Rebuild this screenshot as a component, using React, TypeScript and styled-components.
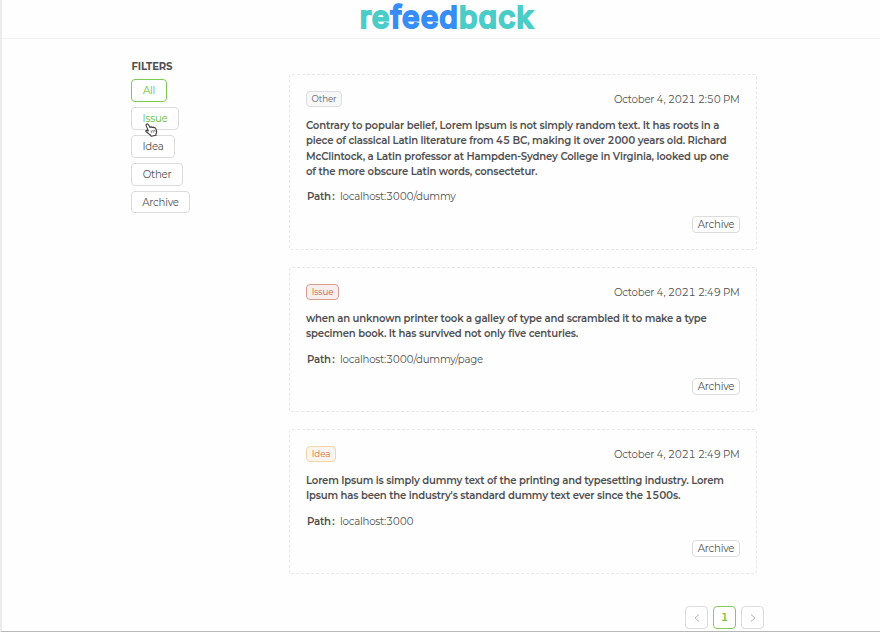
import React from "react";
import styled, { createGlobalStyle } from "styled-components";

const Global = createGlobalStyle`
  * { box-sizing: border-box; }
  body {
    margin: 0;
    background: #fefefe;
    color: #505052;
    font-family: Montserrat, Inter, sans-serif;
    font-size: 10.2px;
    letter-spacing: -0.23px;
    font-feature-settings: "tnum";
  }
  button { font: inherit; letter-spacing: inherit; font-feature-settings: inherit; color: inherit; padding: 0; }
`;

const Page = styled.div`
  height: 632px;
  overflow: hidden;
  display: flex;
  flex-direction: column;
  border-left: 2px solid #ececee;
  border-bottom: 1px solid #b8b8b8;
`;

const Header = styled.header`
  flex: none;
  height: 39px;
  display: flex;
  justify-content: center;
  border-bottom: 1px solid #f2f2f2;
`;

const Logo = styled.h1`
  margin: 0 0 0 12px;
  font-family: Inter, sans-serif;
  font-size: 30px;
  line-height: 34px;
  font-weight: 500;
  letter-spacing: 1.05px;
  font-feature-settings: "cv11";
  color: #4accc8;
  -webkit-text-stroke: 2px currentColor;
  paint-order: stroke fill;
  stroke-linejoin: round;
`;

const LogoAccent = styled.span`
  color: #378df8;
`;

const Body = styled.div`
  flex: 1;
  min-height: 0;
  display: flex;
  padding-left: 129px;
`;

const Sidebar = styled.aside`
  width: 158px;
  padding-top: 20px;
  display: flex;
  flex-direction: column;
  align-items: flex-start;
  gap: 5px;
`;

const SidebarTitle = styled.h2`
  margin: 0 0 1px 0.5px;
  height: 14px;
  line-height: 15px;
  font-size: 10.1px;
  letter-spacing: -0.16px;
  font-weight: 700;
`;

const FilterButton = styled.button<{ $width: number; $state?: "active" | "hover" }>`
  position: relative;
  width: ${(p) => p.$width}px;
  height: 22.9px;
  border-radius: 4px;
  border: 1px solid ${(p) => (p.$state === "active" ? "#7ccb52" : "#dcdcdc")};
  background: #fff;
  color: ${(p) => (p.$state ? "#65bd36" : "inherit")};
`;

const Pointer = styled.svg`
  position: absolute;
  left: 13px;
  top: 15px;
  z-index: 1;
`;

const Feed = styled.main`
  width: 475px;
  padding-top: 35px;
  display: flex;
  flex-direction: column;
  gap: 17px;
`;

const Card = styled.article<{ $height: number }>`
  flex: none;
  width: 468px;
  height: ${(p) => p.$height}px;
  padding: 16px;
  border: 1px dashed #e8e8e8;
  border-radius: 3px;
  display: flex;
  flex-direction: column;
`;

const CardHead = styled.div`
  height: 16px;
  display: flex;
  justify-content: space-between;
  align-items: center;
`;

type Kind = "Other" | "Issue" | "Idea";

const tagColors: Record<Kind, [string, string, string, number]> = {
  Other: ["#606062", "#dedee0", "#f7f7f8", 36],
  Issue: ["#c9583f", "#d99d90", "#f7efee", 33],
  Idea: ["#d56a3c", "#f3d6a4", "#faf5ee", 30],
};

const Tag = styled.span<{ $kind: Kind }>`
  width: ${(p) => tagColors[p.$kind][3]}px;
  height: 16px;
  line-height: 14px;
  text-align: center;
  font-size: 8.7px;
  letter-spacing: -0.1px;
  border-radius: 4px;
  color: ${(p) => tagColors[p.$kind][0]};
  border: 1px solid ${(p) => tagColors[p.$kind][1]};
  background: ${(p) => tagColors[p.$kind][2]};
`;

const Stamp = styled.time`
  margin-right: 0.5px;
  white-space: nowrap;
`;

const Message = styled.p`
  margin: 11px 0 0;
  font-size: 10.1px;
  letter-spacing: -0.175px;
  line-height: 15.3px;
  font-weight: 600;
`;

const Line = styled.span`
  display: block;
  white-space: nowrap;
`;

const PathRow = styled.div`
  margin: 10px 0 0 1px;
  height: 16px;
  line-height: 16px;
  display: flex;
`;

const PathLabel = styled.span`
  font-weight: 600;

  &::after {
    content: ":";
    margin: 0 5.6px 0 1.4px;
  }
`;

const ArchiveButton = styled.button`
  margin-top: auto;
  align-self: flex-end;
  width: 48px;
  height: 17px;
  border: 1px solid #dcdcdc;
  border-radius: 4px;
  background: #fff;
`;

const Pagination = styled.nav`
  margin-top: 15px;
  display: flex;
  justify-content: flex-end;
  gap: 5px;
`;

const PageButton = styled.button<{ $current?: boolean }>`
  width: 23px;
  height: 23px;
  display: flex;
  align-items: center;
  justify-content: center;
  border-radius: 4px;
  border: 1px solid ${(p) => (p.$current ? "#86c960" : "#dcdcdc")};
  background: #fff;
  color: ${(p) => (p.$current ? "#72c546" : "#b4b4b4")};
  font-weight: 600;
`;

const Chevron = ({ d }: { d: string }) => (
  <svg width="8" height="10" viewBox="0 0 8 10" fill="none" stroke="currentColor">
    <path d={d} />
  </svg>
);

const HandPointer = () => (
  <Pointer width="13" height="14" viewBox="0 0 13 14">
    <path
      d="M1.2 1.5C2 .5 3 .9 3.5 1.8L5 4.5c.5-.8 1.5-.8 2 0 .6-.6 1.5-.5 1.9.2.7-.4 1.5 0 1.8.8l.8 2.4c.4 1.5-.1 2.5-.7 3.4l.3.9-4.9 1.1-.7-1.2C4 11.4 3.1 9.8 1.1 8.8c-.8-.7 0-1.7 1-1.4l1.3.5L1.3 3.1C1 2.5.9 2 1.2 1.5z"
      fill="#fff"
      stroke="#3c3c3c"
      strokeWidth="1.1"
      strokeLinejoin="round"
    />
    <path d="M6 7.5l.8 2.5M7.8 7l.8 2.5M9.5 6.8l.6 2" stroke="#555" strokeWidth=".8" />
  </Pointer>
);

interface Entry {
  kind: Kind;
  date: string;
  lines: string[];
  path: string;
  height: number;
}

const entries: Entry[] = [
  {
    kind: "Other",
    date: "October 4, 2021 2:50 PM",
    lines: [
      "Contrary to popular belief, Lorem Ipsum is not simply random text. It has roots in a",
      "piece of classical Latin literature from 45 BC, making it over 2000 years old. Richard",
      "McClintock, a Latin professor at Hampden-Sydney College in Virginia, looked up one",
      "of the more obscure Latin words, consectetur.",
    ],
    path: "localhost:3000/dummy",
    height: 176,
  },
  {
    kind: "Issue",
    date: "October 4, 2021 2:49 PM",
    lines: [
      "when an unknown printer took a galley of type and scrambled it to make a type",
      "specimen book. It has survived not only five centuries.",
    ],
    path: "localhost:3000/dummy/page",
    height: 145,
  },
  {
    kind: "Idea",
    date: "October 4, 2021 2:49 PM",
    lines: [
      "Lorem Ipsum is simply dummy text of the printing and typesetting industry. Lorem",
      "Ipsum has been the industry's standard dummy text ever since the 1500s.",
    ],
    path: "localhost:3000",
    height: 145,
  },
];

export default function App() {
  return (
    <>
      <Global />
      <Page>
        <Header>
          <Logo>
            re<LogoAccent>feed</LogoAccent>back
          </Logo>
        </Header>
        <Body>
          <Sidebar>
            <SidebarTitle>FILTERS</SidebarTitle>
            <FilterButton $width={36} $state="active">All</FilterButton>
            <FilterButton $width={48} $state="hover">
              Issue
              <HandPointer />
            </FilterButton>
            <FilterButton $width={44}>Idea</FilterButton>
            <FilterButton $width={52}>Other</FilterButton>
            <FilterButton $width={59}>Archive</FilterButton>
          </Sidebar>
          <Feed>
            {entries.map((e) => (
              <Card key={e.kind} $height={e.height}>
                <CardHead>
                  <Tag $kind={e.kind}>{e.kind}</Tag>
                  <Stamp>{e.date}</Stamp>
                </CardHead>
                <Message>
                  {e.lines.map((text) => (
                    <Line key={text}>{text}</Line>
                  ))}
                </Message>
                <PathRow>
                  <PathLabel>Path</PathLabel>
                  <span>{e.path}</span>
                </PathRow>
                <ArchiveButton>Archive</ArchiveButton>
              </Card>
            ))}
            <Pagination>
              <PageButton><Chevron d="M6 1.5 2 5l4 3.5" /></PageButton>
              <PageButton $current>1</PageButton>
              <PageButton><Chevron d="M2 1.5 6 5l-4 3.5" /></PageButton>
            </Pagination>
          </Feed>
        </Body>
      </Page>
    </>
  );
}
